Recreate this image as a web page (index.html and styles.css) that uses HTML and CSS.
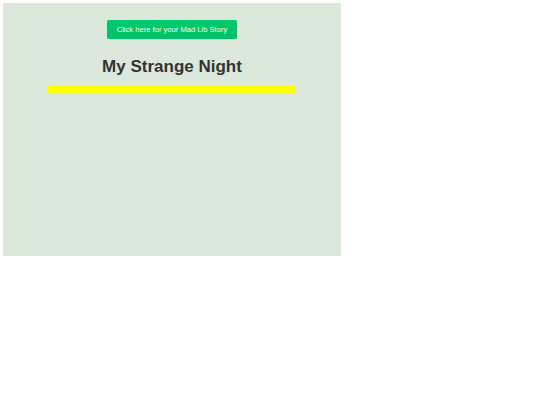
FILE: index.html
```html
<!DOCTYPE html>
<html>
<head>
<meta charset="utf-8">
<link rel="stylesheet" href="styles.css">
</head>
<body>
<div class="page">
  <button class="story-btn">Click here for your Mad Lib Story</button>
  <h1 class="title">My Strange Night</h1>
  <div class="bar"></div>
</div>
</body>
</html>
```
FILE: styles.css
```css
html, body {
  margin: 0;
  padding: 0;
  background: #ffffff;
}
.page {
  margin: 3px;
  width: 338px;
  height: 253px;
  background: #dde8dd;
  display: flex;
  flex-direction: column;
  align-items: center;
  padding-top: 17px;
  box-sizing: border-box;
  font-family: "Liberation Sans", Arial, sans-serif;
}
.story-btn {
  width: 130px;
  height: 19px;
  border: none;
  border-radius: 2px;
  background: linear-gradient(#00cc70, #00bf66);
  color: #eafff2;
  font-family: "Liberation Sans", Arial, sans-serif;
  font-size: 7.6px;
  padding: 0;
  box-shadow: 0 0 1px rgba(0,0,0,0.15);
}
.title {
  margin: 18px 0 0;
  font-size: 17px;
  line-height: 19px;
  font-weight: bold;
  color: #333333;
}
.bar {
  margin-top: 10px;
  width: 248px;
  height: 8px;
  background: #ffff00;
}
```
